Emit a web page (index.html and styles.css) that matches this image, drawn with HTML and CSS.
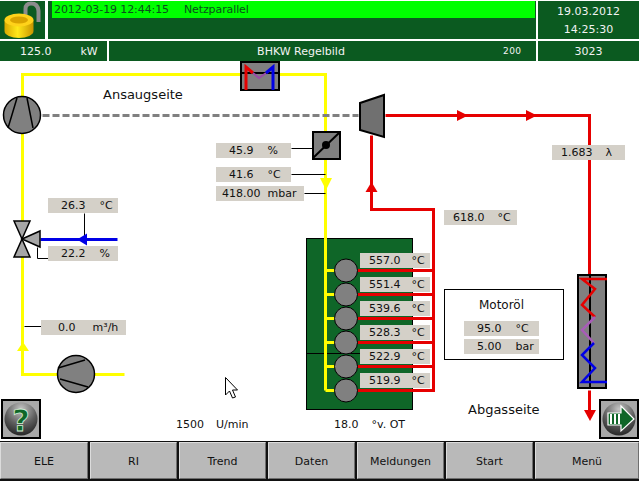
FILE: index.html
```html
<!DOCTYPE html>
<html lang="de">
<head>
<meta charset="utf-8">
<title>BHKW Regelbild</title>
<link rel="stylesheet" href="styles.css">
</head>
<body>
<div class="screen">
  <header class="head">
    <div class="row row-top">
      <div class="cell lock">
        <svg width="45" height="38" viewBox="0 1 45 38">
          <defs>
            <linearGradient id="gold" x1="0" x2="1" y1="0" y2="0">
              <stop offset="0" stop-color="#d8a800"/>
              <stop offset=".45" stop-color="#ffe81a"/>
              <stop offset="1" stop-color="#c89400"/>
            </linearGradient>
          </defs>
          <path d="M25.500 19V9Q25.500 3.500 31 3.500Q38 3.500 38.500 11V22" fill="none" stroke="#8c8c8c" stroke-width="4"/>
          <path d="M4.500 20V31A14.500 7 0 0 0 33.500 31V20Z" fill="url(#gold)"/>
          <ellipse cx="19" cy="20" rx="14.500" ry="6.500" fill="#ffd21a"/>
          <ellipse cx="19" cy="20" rx="9" ry="3.500" fill="#d9a300"/>
        </svg>
      </div>
      <div class="cell status"><div class="alarm"><span class="stamp">2012-03-19 12:44:15</span><span>Netzparallel</span></div></div>
      <div class="cell clock"><span>19.03.2012</span><span>14:25:30</span></div>
    </div>
    <div class="row row-sub">
      <div class="cell power"><span>125.0</span><span>kW</span></div>
      <div class="cell title"><span>BHKW Regelbild</span><span class="code">200</span></div>
      <div class="cell counter">3023</div>
    </div>
  </header>

  <main class="plant">
    <svg class="diagram" width="639" height="380" viewBox="0 61 639 380">
      <rect x="306.500" y="238.500" width="106" height="171" fill="#0f6628" stroke="#000"/>
      <path d="M306 353.500H412" stroke="#000" fill="none"/>

      <g class="px">
        <g fill="none" stroke="#ffff00" stroke-width="3">
          <path d="M22 100V74H325V390"/>
          <path d="M22 130V222M22 256V374H124"/>
          <path d="M325 270H338M325 294H338M325 318H338M325 342H338M325 366H338M325 390H338"/>
        </g>
        <path d="M42 115H358" stroke="#808080" stroke-width="3" stroke-dasharray="7 3" fill="none"/>
        <g fill="none" stroke="#000">
          <path d="M291 148H313M291 174H325M304 193H325M84 213V239M37 247V258H48M24 326H41"/>
        </g>
        <g fill="none" stroke="#e60000" stroke-width="3">
          <path d="M385 115H589V274"/>
          <path d="M371 135V209H433V390H357"/>
          <path d="M357 270H433M357 294H433M357 318H433M357 342H433M357 366H433"/>
          <path d="M589 390V412"/>
        </g>
        <path d="M40 239H117" stroke="#0000e6" stroke-width="3" fill="none"/>
      </g>

      <path d="M320 178H332L326 190Z" fill="#ffff00"/>
      <path d="M17 351H29L23 342Z" fill="#ffff00"/>
      <g fill="#e60000">
        <path d="M457 110L468 115.500L457 121Z"/>
        <path d="M526 110L537 115.500L526 121Z"/>
        <path d="M365.500 192H377.500L371.500 182Z"/>
        <path d="M584 410H596L590 421Z"/>
      </g>
      <path d="M77 239.500L87 233.500V245.500Z" fill="#0000e6"/>

      <g stroke="#000" fill="#808080" stroke-width="1.500">
        <circle cx="22" cy="115" r="18.500"/>
        <circle cx="76" cy="374" r="18.500"/>
      </g>
      <path d="M8 128L17 98M33 128L27 98M58 368L85 360M60 379L88 387" stroke="#000" stroke-width="1.500" fill="none"/>

      <g fill="#a6a6a6" stroke="#000" stroke-width="1.500">
        <path d="M14 221H30L22 239Z"/>
        <path d="M22 239L30 257H14Z"/>
        <path d="M22 239L40 231V247Z"/>
      </g>

      <rect x="241" y="62" width="38" height="28" fill="#808080" stroke="#000" stroke-width="2"/>
      <path d="M241 73H279" stroke="#000" stroke-width="2" fill="none"/>
      <path d="M246 90V67L253 73" stroke="#e60000" stroke-width="3" fill="none"/>
      <path d="M253 73L259 78L266 73" stroke="#9a4aa8" stroke-width="2" fill="none"/>
      <path d="M266 73L273 67V90" stroke="#0000e6" stroke-width="3" fill="none"/>

      <rect x="313" y="132" width="27" height="27" fill="#808080" stroke="#000" stroke-width="2"/>
      <path d="M313 158L340 132" stroke="#000" stroke-width="2" fill="none"/>
      <circle cx="326" cy="145" r="4" fill="#000"/>

      <path d="M360 103L384 95V137L360 130Z" fill="#707070" stroke="#000" stroke-width="2"/>

      <g fill="#808080" stroke="#000">
        <circle cx="346" cy="270.500" r="11.500"/>
        <circle cx="346" cy="294.500" r="11.500"/>
        <circle cx="346" cy="318.500" r="11.500"/>
        <circle cx="346" cy="342.500" r="11.500"/>
        <circle cx="346" cy="366.500" r="11.500"/>
        <circle cx="346" cy="390.500" r="11.500"/>
      </g>

      <rect x="578" y="275" width="28" height="113" fill="#808080" stroke="#000" stroke-width="2"/>
      <path d="M590 275V388" stroke="#000" stroke-width="2" fill="none"/>
      <path d="M607 279H582L595 289L582 305L595 317" stroke="#e60000" stroke-width="2.500" fill="none"/>
      <path d="M595 317L582 330L594 343" stroke="#a85cb8" stroke-width="2.500" fill="none"/>
      <path d="M594 343L582 355L595 368L582 382H607" stroke="#0000e6" stroke-width="2.500" fill="none"/>

      <path d="M225.500 377.500V395L229.500 391L232.500 398L235.500 397L232.500 390H237.500Z" fill="#fff" stroke="#000"/>
    </svg>

    <span class="caption cap-ansaug">Ansaugseite</span>
    <span class="caption cap-abgas">Abgasseite</span>

    <div class="lab l-damper"><span>45.9</span><span>%</span></div>
    <div class="lab l-temp"><span>41.6</span><span>°C</span></div>
    <div class="lab l-press"><span>418.00</span><span>mbar</span></div>
    <div class="lab l-cool"><span>26.3</span><span>°C</span></div>
    <div class="lab l-valve"><span>22.2</span><span>%</span></div>
    <div class="lab l-flow"><span>0.0</span><span>m³/h</span></div>
    <div class="lab l-exh"><span>618.0</span><span>°C</span></div>
    <div class="lab l-lambda"><span>1.683</span><span>λ</span></div>

    <div class="lab cyl c1"><span>557.0</span><span>°C</span></div>
    <div class="lab cyl c2"><span>551.4</span><span>°C</span></div>
    <div class="lab cyl c3"><span>539.6</span><span>°C</span></div>
    <div class="lab cyl c4"><span>528.3</span><span>°C</span></div>
    <div class="lab cyl c5"><span>522.9</span><span>°C</span></div>
    <div class="lab cyl c6"><span>519.9</span><span>°C</span></div>

    <section class="oil">
      <h2 class="oil-title">Motoröl</h2>
      <div class="oil-lab"><span>95.0</span><span>°C</span></div>
      <div class="oil-lab"><span>5.00</span><span>bar</span></div>
    </section>

    <div class="readout r-speed"><span>1500</span><span>U/min</span></div>
    <div class="readout r-angle"><span>18.0</span><span>°v. OT</span></div>

    <button class="round r-help" type="button" aria-label="Hilfe">
      <svg width="36" height="36" viewBox="0 0 36 36">
        <defs>
          <radialGradient id="ball" cx=".5" cy=".2" r=".85">
            <stop offset="0" stop-color="#c4c4c4"/>
            <stop offset=".55" stop-color="#5e5e5e"/>
            <stop offset="1" stop-color="#1f1f1f"/>
          </radialGradient>
        </defs>
        <circle cx="18" cy="18" r="16.500" fill="url(#ball)"/>
        <text x="18" y="30" class="q">?</text>
      </svg>
    </button>
    <button class="round r-next" type="button" aria-label="Weiter">
      <svg width="36" height="36" viewBox="0 0 36 36">
        <defs>
          <radialGradient id="ball2" cx=".5" cy=".2" r=".85">
            <stop offset="0" stop-color="#c4c4c4"/>
            <stop offset=".55" stop-color="#5e5e5e"/>
            <stop offset="1" stop-color="#1f1f1f"/>
          </radialGradient>
        </defs>
        <circle cx="18" cy="18" r="16.500" fill="url(#ball2)"/>
        <path d="M7 12H20V5L33 18L20 30V24H7Z" fill="#0f6628" stroke="#fff" stroke-width="1.200"/>
        <path d="M10 13V23M14 13V23M18 13V23" stroke="#fff" stroke-width="2"/>
      </svg>
    </button>
  </main>

  <nav class="menu">
    <button class="key" type="button">ELE</button>
    <button class="key" type="button">RI</button>
    <button class="key" type="button">Trend</button>
    <button class="key" type="button">Daten</button>
    <button class="key" type="button">Meldungen</button>
    <button class="key" type="button">Start</button>
    <button class="key" type="button">Menü</button>
  </nav>
</div>
</body>
</html>
```

FILE: styles.css
```css
* { box-sizing: border-box; }
html, body { margin: 0; padding: 0; background: #fff; }
body { font: 11px/1 "DejaVu Sans", sans-serif; color: #111; overflow: hidden; }

.screen { width: 639px; height: 481px; display: flex; flex-direction: column; }

.head { display: flex; flex-direction: column; gap: 2px; padding-top: 1px; }
.row { display: flex; gap: 2px; }
.row-top { height: 38px; }
.row-sub { height: 20px; }
.cell { background: #0b5a20; color: #f2f2f2; }

.lock { width: 45px; margin-right: 1px; }
.lock svg { display: block; }
.status { width: 488px; padding: 0 1px 0 4px; }
.alarm { height: 17px; background: #00ff00; color: #0a4f1c; display: flex; align-items: center; padding-left: 2px; gap: 15px; letter-spacing: -.1px; }
.clock { width: 101px; display: flex; flex-direction: column; align-items: center; justify-content: space-around; padding: 1px 0; }

.power { width: 107px; display: flex; align-items: center; gap: 29px; padding-left: 20px; }
.title { width: 427px; position: relative; display: flex; align-items: center; justify-content: center; padding-right: 43px; }
.code { position: absolute; left: 394px; top: 6px; font-size: 9px; letter-spacing: .4px; }
.counter { width: 101px; display: flex; align-items: center; justify-content: center; }

.plant { position: relative; flex: 1; min-height: 0; }
.diagram { position: absolute; left: 0; top: 0; display: block; }
.px { transform: translate(.5px, .5px); }

.caption { position: absolute; font-size: 13px; color: #111; }
.cap-ansaug { left: 103px; top: 27px; }
.cap-abgas { left: 468px; top: 342px; }

.lab { position: absolute; height: 15px; background: #d4d0c8; display: flex; align-items: center; gap: 14px; padding-left: 13px; white-space: nowrap; }
.l-damper { left: 216px; top: 82px; width: 75px; }
.l-temp { left: 216px; top: 106px; width: 75px; }
.l-press { left: 216px; top: 125px; width: 88px; padding-left: 6px; gap: 7px; }
.l-cool { left: 48px; top: 137px; width: 70px; }
.l-valve { left: 48px; top: 185px; width: 70px; }
.l-flow { left: 41px; top: 259px; width: 85px; padding-left: 17px; gap: 17px; }
.l-exh { left: 444px; top: 149px; width: 73px; padding-left: 9px; gap: 13px; }
.l-lambda { left: 552px; top: 84px; width: 73px; padding-left: 9px; gap: 13px; }

.cyl { left: 360px; width: 70px; padding-left: 9px; gap: 11px; }
.c1 { top: 192px; }
.c2 { top: 216px; }
.c3 { top: 240px; }
.c4 { top: 264px; }
.c5 { top: 288px; }
.c6 { top: 312px; }

.oil { position: absolute; left: 444px; top: 228px; width: 120px; height: 71px; background: #fff; border: 1px solid #000; display: flex; flex-direction: column; align-items: center; padding: 9px 5px 0 0; }
.oil-title { margin: 0 0 10px; font: 400 12px/1 "DejaVu Sans", sans-serif; }
.oil-lab { width: 75px; height: 15px; background: #d4d0c8; display: flex; align-items: center; gap: 14px; padding-left: 13px; margin-bottom: 3px; }

.readout { position: absolute; display: flex; gap: 12px; color: #111; }
.r-speed { left: 176px; top: 358px; }
.r-angle { left: 334px; top: 358px; gap: 13px; }

.round { position: absolute; width: 40px; height: 40px; padding: 0; border: 2px solid #000; background: #a8a8a8; display: flex; align-items: center; justify-content: center; }
.r-help { left: 1px; top: 338px; }
.r-next { left: 599px; top: 338px; }
.q { font: 700 30px "DejaVu Sans", sans-serif; text-anchor: middle; fill: #0f6628; stroke: #d8f0d8; stroke-width: .8px; }

.menu { height: 40px; display: grid; grid-template-columns: 88px 87px 87px 87px 87px 87px 1fr; gap: 2px; background: #111; padding: 1px 0 2px; }
.key { font: 11px "DejaVu Sans", sans-serif; color: #111; background: #b9b9b9; padding: 2px 0 0; border: 1px solid; border-color: #dcdcdc #6e6e6e #6e6e6e #dcdcdc; }
```
